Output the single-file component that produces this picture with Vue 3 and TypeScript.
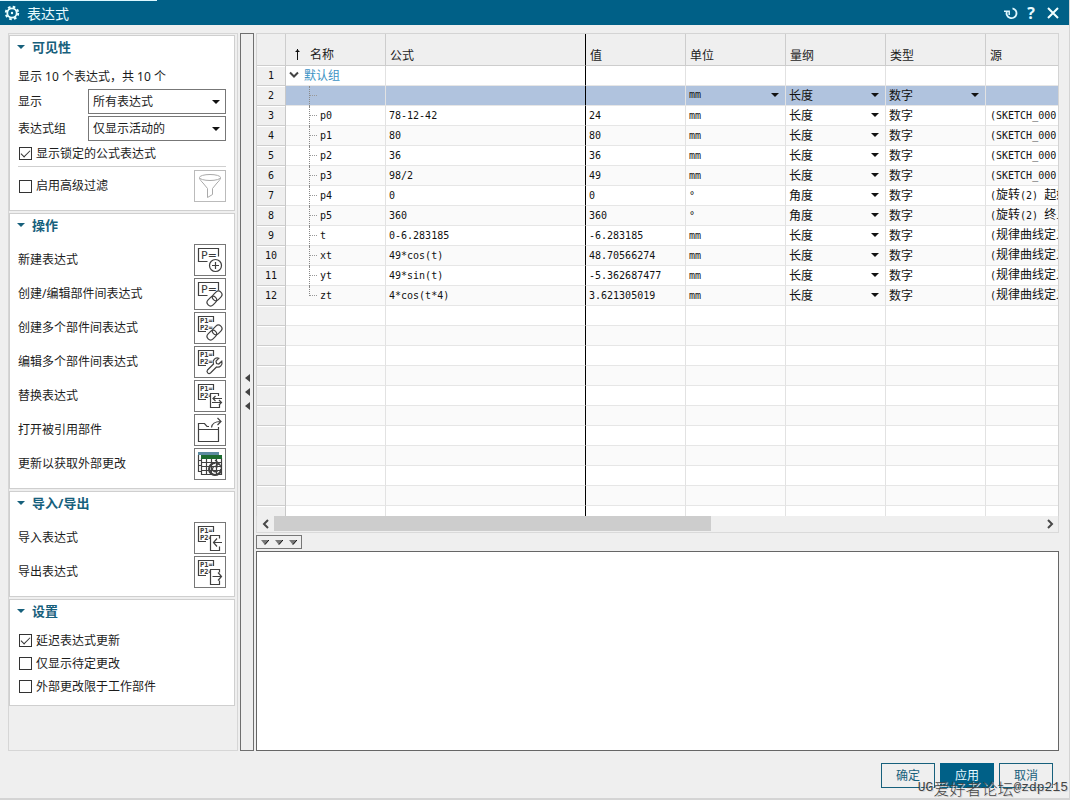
<script setup lang="ts">
import { ref } from 'vue'

interface Row {
  name: string
  formula: string
  value: string
  unit: string
  dim: string
  type: string
  source: string
}
interface Run {
  text: string
  latin: boolean
}
interface Action {
  label: string
  icon: string
}

const show = ref('所有表达式')
const group = ref('仅显示活动的')
const lockedFormulas = ref(true)
const advancedFilter = ref(false)
const notes = ref('')

const settings = ref([
  { id: 'delay', label: '延迟表达式更新', on: true },
  { id: 'pending', label: '仅显示待定更改', on: false },
  { id: 'external', label: '外部更改限于工作部件', on: false },
])

const actions: Action[] = [
  { label: '新建表达式', icon: 'new' },
  { label: '创建/编辑部件间表达式', icon: 'link' },
  { label: '创建多个部件间表达式', icon: 'multilink' },
  { label: '编辑多个部件间表达式', icon: 'wrench' },
  { label: '替换表达式', icon: 'replace' },
  { label: '打开被引用部件', icon: 'open' },
  { label: '更新以获取外部更改', icon: 'update' },
]
const transfers: Action[] = [
  { label: '导入表达式', icon: 'import' },
  { label: '导出表达式', icon: 'export' },
]

const row = (name: string, formula: string, value: string, unit: string, dim: string, source: string): Row => ({
  name, formula, value, unit, dim, type: '数字', source,
})
const rows: Row[] = [
  row('p0', '78-12-42', '24', 'mm', '长度', '(SKETCH_000:'),
  row('p1', '80', '80', 'mm', '长度', '(SKETCH_000:'),
  row('p2', '36', '36', 'mm', '长度', '(SKETCH_000:'),
  row('p3', '98/2', '49', 'mm', '长度', '(SKETCH_000:'),
  row('p4', '0', '0', '°', '角度', '(旋转(2) 起始'),
  row('p5', '360', '360', '°', '角度', '(旋转(2) 终止'),
  row('t', '0-6.283185', '-6.283185', 'mm', '长度', '(规律曲线定义'),
  row('xt', '49*cos(t)', '48.70566274', 'mm', '长度', '(规律曲线定义'),
  row('yt', '49*sin(t)', '-5.362687477', 'mm', '长度', '(规律曲线定义'),
  row('zt', '4*cos(t*4)', '3.621305019', 'mm', '长度', '(规律曲线定义'),
]
const emptyRows = 40

function runs(text: string): Run[] {
  return (text.match(/[\x00-\xff]+|[^\x00-\xff]+/g) ?? []).map((t) => ({
    text: t,
    latin: t.charCodeAt(0) < 256,
  }))
}
const watermark = runs('UG爱好者论坛@zdp215')
</script>

<template>
  <div class="window">
    <header class="titlebar">
      <svg class="gear" viewBox="0 0 16 16" width="16" height="16">
        <circle cx="8" cy="8" r="6.2" fill="none" stroke="#e8ffff" stroke-width="2" stroke-dasharray="2.6 2.27" />
        <circle cx="8" cy="8" r="4.7" fill="none" stroke="#e8ffff" stroke-width="1.8" />
        <circle cx="8" cy="8" r="1.2" fill="#e8ffff" />
      </svg>
      <h1>表达式</h1>
      <button type="button" aria-label="重置">
        <svg viewBox="0 0 14 14" width="14" height="14" fill="none" stroke="#dff8ff" stroke-width="1.8">
          <path d="M8.500 2.300A5 5 0 1 1 2.800 5.500" />
          <path d="M0 5.200H5.200V9" stroke-width="1.5" />
        </svg>
      </button>
      <button type="button" class="help" aria-label="帮助">?</button>
      <button type="button" aria-label="关闭">
        <svg viewBox="0 0 14 14" width="14" height="14" fill="none" stroke="#f2ffff" stroke-width="2">
          <path d="M2 2L12 12M12 2L2 12" />
        </svg>
      </button>
    </header>

    <main>
      <aside class="side">
        <section class="visibility">
          <h2><i class="tri"></i>可见性</h2>
          <p>显示 10 个表达式，共 10 个</p>
          <div class="field">
            <label for="show">显示</label>
            <span class="pick">
              <select id="show" v-model="show"><option>所有表达式</option></select>
              <i class="arrow"></i>
            </span>
          </div>
          <div class="field">
            <label for="group">表达式组</label>
            <span class="pick">
              <select id="group" v-model="group"><option>仅显示活动的</option></select>
              <i class="arrow"></i>
            </span>
          </div>
          <label class="check tall"><input v-model="lockedFormulas" type="checkbox" />显示锁定的公式表达式</label>
          <div class="filter">
            <label class="check"><input v-model="advancedFilter" type="checkbox" />启用高级过滤</label>
            <button type="button" class="tool off" disabled aria-label="过滤">
              <svg viewBox="0 0 30 30" width="30" height="30" fill="none" stroke="#aaaaaa">
                <ellipse cx="15" cy="6.5" rx="10.5" ry="3" />
                <path d="M4.5 7C5 9 6.500 10.500 8 12L12.500 17.500V26.500L17.500 23.500V17.500L22 12C23.500 10.500 25 9 25.500 7" />
              </svg>
            </button>
          </div>
        </section>

        <section v-for="(list, i) in [actions, transfers]" :key="i">
          <h2><i class="tri"></i>{{ i === 0 ? '操作' : '导入/导出' }}</h2>
          <div v-for="a in list" :key="a.icon" class="action">
            <span :id="'l-' + a.icon">{{ a.label }}</span>
            <button type="button" class="tool" :aria-labelledby="'l-' + a.icon">
              <svg viewBox="0 0 30 30" width="30" height="30" fill="none" stroke="#404040" stroke-width="1.2">
                <template v-if="a.icon === 'new' || a.icon === 'link'">
                  <path d="M12.500 16.500H3.500V3.500H23.500V11.500" />
                  <text class="big" x="6" y="14">P=</text>
                </template>
                <template v-else-if="a.icon !== 'open' && a.icon !== 'update'">
                  <path d="M11 18.500H3.500V3.500H18.500V9" />
                  <text class="small" x="5" y="10">P1=</text>
                  <text class="small" x="5" y="17">P2=</text>
                </template>
                <template v-if="a.icon === 'new'">
                  <circle cx="20.500" cy="20.500" r="6" fill="#fff" />
                  <path d="M17 20.500H24M20.500 17V24" />
                </template>
                <template v-if="a.icon === 'link' || a.icon === 'multilink'">
                  <g transform="rotate(-45 19.500 19.500)">
                    <rect x="10.500" y="16" width="10.500" height="7" rx="3.500" fill="#fff" />
                    <rect x="18" y="16" width="10.500" height="7" rx="3.500" />
                  </g>
                </template>
                <path
                  v-if="a.icon === 'wrench'"
                  fill="#fff"
                  d="M12.500 23L18.500 17C17 13.500 20 10 23.800 11.200L21 14.200L21.500 16.500L23.800 17L26.800 14.200C27.800 18 25 21 21.500 20L15.500 26C13.500 27.500 11 25 12.500 23Z"
                />
                <template v-if="a.icon === 'replace'">
                  <path d="M15.500 12.500H23.500V26.500H15.500Z" fill="#fff" stroke="none" />
                  <path d="M23.500 15V12.500H15.500V26.500H24.500V23.500" />
                  <path d="M27 17.500H18M20.500 15L18 17.500L20.500 20M17 21.500H26.500M24 19L26.500 21.500L24 24" />
                </template>
                <template v-if="a.icon === 'import' || a.icon === 'export'">
                  <path d="M15.500 12.500H23.500V27.500H15.500Z" fill="#fff" stroke="none" />
                  <path d="M24.500 15.500V12.500H15.500V27.500H24.500V23.500" />
                </template>
                <path v-if="a.icon === 'import'" d="M27 19.500H18.500M22 15.500L18.500 19.500L22 23.500" />
                <path v-if="a.icon === 'export'" d="M17.500 19.500H26.500M23 15.500L26.500 19.500L23 23.500" />
                <template v-if="a.icon === 'open'">
                  <path d="M3.500 14.500V8.500H9.500L12 11.500H14M3.500 14.500H23.500V26.500H3.500ZM23.500 14.500V12" />
                  <path d="M16.500 12.500C17 9 20 6.500 25.500 6.500M22.500 3L26 6.500L22.500 10" />
                </template>
                <template v-if="a.icon === 'update'">
                  <path d="M3.500 6V22.500H6M3.500 11.500H7M3.500 16.500H7" />
                  <path d="M3 4.500H24" stroke="#5c8ba0" stroke-width="3" />
                  <path d="M6.500 9V25.500H26.500V9M11.500 9V25.500M16.500 9V25.500M21.500 9V25.500M6.500 13.500H26.500M6.500 17.500H26.500M6.500 21.500H26.500" fill="#fff" />
                  <path d="M6 8H27" stroke="#1d6b30" stroke-width="4" />
                  <circle cx="20.500" cy="20" r="6" stroke="#404040" />
                  <path d="M20 14A6 6 0 1 0 26 20" stroke-width="2" />
                  <path d="M22.500 18.300A2.800 2.800 0 1 0 22.500 21.800H19.500M20 11L24 14.500L20 18" />
                </template>
              </svg>
            </button>
          </div>
        </section>

        <section>
          <h2><i class="tri"></i>设置</h2>
          <label v-for="s in settings" :key="s.id" class="check row"><input v-model="s.on" type="checkbox" />{{ s.label }}</label>
        </section>
      </aside>

      <button type="button" class="splitter" aria-label="折叠面板"><i></i><i></i><i></i></button>

      <div class="work">
        <div class="sheet">
          <table>
            <colgroup>
              <col class="c-num" /><col class="c-name" /><col class="c-formula" /><col class="c-std" />
              <col class="c-std" /><col class="c-std" /><col class="c-std" /><col class="c-source" />
            </colgroup>
            <thead>
              <tr>
                <th></th>
                <th>
                  <svg class="sort" viewBox="0 0 7 12" width="7" height="12" fill="none" stroke="#111"><path d="M3.500 1V12M1.500 3.500H5.500M2.500 2.500H4.500" /></svg>名称
                </th>
                <th>公式</th><th>值</th><th>单位</th><th>量纲</th><th>类型</th><th>源</th>
              </tr>
            </thead>
            <tbody>
              <tr>
                <td>1</td>
                <td class="root">
                  <div>
                    <svg viewBox="0 0 10 8" width="10" height="8" fill="none" stroke="#444" stroke-width="2"><path d="M1 1.500L5 5.500L9 1.500" /></svg>默认组
                  </div>
                </td>
                <td></td><td></td><td></td><td></td><td></td><td></td>
              </tr>
              <tr class="selected">
                <td>2</td>
                <td class="node"><div><i class="branch"></i></div></td>
                <td></td><td></td>
                <td><span class="pick"><select class="latin" aria-label="单位"><option>mm</option></select><i class="arrow"></i></span></td>
                <td><span class="pick"><select aria-label="量纲"><option>长度</option></select><i class="arrow"></i></span></td>
                <td><span class="pick"><select aria-label="类型"><option>数字</option></select><i class="arrow"></i></span></td>
                <td></td>
              </tr>
              <tr v-for="(r, i) in rows" :key="r.name">
                <td>{{ i + 3 }}</td>
                <td class="node"><div><i class="branch" :class="{ last: i === rows.length - 1 }"></i>{{ r.name }}</div></td>
                <td>{{ r.formula }}</td>
                <td>{{ r.value }}</td>
                <td>{{ r.unit }}</td>
                <td><span class="pick"><select :aria-label="'量纲 ' + r.name"><option>{{ r.dim }}</option></select><i class="arrow"></i></span></td>
                <td class="han">{{ r.type }}</td>
                <td class="source"><span v-for="(s, k) in runs(r.source)" :key="k" :class="{ han: !s.latin }">{{ s.text }}</span></td>
              </tr>
              <tr v-for="n in emptyRows" :key="n">
                <td></td><td></td><td></td><td></td><td></td><td></td><td></td><td></td>
              </tr>
            </tbody>
          </table>
        </div>
        <div class="scroll">
          <button type="button" aria-label="向左滚动">
            <svg viewBox="0 0 8 10" width="8" height="10" fill="none" stroke="#484848" stroke-width="2"><path d="M6 1L2 5L6 9" /></svg>
          </button>
          <div class="track"><div class="thumb"></div></div>
          <button type="button" aria-label="向右滚动">
            <svg viewBox="0 0 8 10" width="8" height="10" fill="none" stroke="#484848" stroke-width="2"><path d="M2 1L6 5L2 9" /></svg>
          </button>
        </div>
        <button type="button" class="fold" aria-label="折叠详细信息">
          <svg v-for="n in 3" :key="n" viewBox="0 0 8 5" width="8" height="5"><path d="M0 0H8L4 5Z" fill="#777" /><path d="M8 0L4 4.500" stroke="#111" /></svg>
        </button>
        <textarea v-model="notes" aria-label="详细信息"></textarea>
      </div>
    </main>

    <footer>
      <button type="button">确定</button>
      <button type="button" class="primary">应用</button>
      <button type="button">取消</button>
    </footer>
    <div class="watermark"><span v-for="(s, k) in watermark" :key="k" :class="{ wide: !s.latin }">{{ s.text }}</span></div>
  </div>
</template>

<style>
body {
  margin: 0;
}
</style>

<style scoped>
.window {
  position: relative;
  box-sizing: border-box;
  height: 100vh;
  min-height: 800px;
  display: flex;
  flex-direction: column;
  overflow: hidden;
  background: #efefef;
  border-right: 1px solid #d4d4d4;
  border-bottom: 2px solid #d4d4d4;
  font: 12px/20px "Noto Sans", "Noto Sans CJK SC", sans-serif;
  color: #1c1c1c;
}
button,
select,
textarea {
  margin: 0;
  padding: 0;
  border: 0;
  border-radius: 0;
  background: none;
  font: inherit;
  color: inherit;
}
svg {
  display: block;
}
.titlebar {
  flex: none;
  height: 25px;
  box-sizing: border-box;
  padding: 0 8px 0 4px;
  display: flex;
  align-items: center;
  gap: 4px;
  background: linear-gradient(#dcf8ff, #dcf8ff) 0 0 / 157px 1px no-repeat #006087;
  color: #e8fbff;
}
.titlebar h1 {
  flex: 1;
  margin: 0 0 0 3px;
  padding-top: 2px;
  font-size: 14px;
  font-weight: 400;
}
.titlebar button {
  width: 16px;
  height: 20px;
  display: grid;
  place-items: center;
}
.titlebar .help {
  font: 700 16px/20px "Open Sans", sans-serif;
}
.titlebar button:last-child {
  margin-left: 2px;
}
main {
  flex: 1;
  min-height: 0;
  display: flex;
  gap: 2px;
  padding: 8px 10px 0 8px;
}
.side {
  flex: none;
  width: 230px;
  box-sizing: border-box;
  border: 1px solid #d6d6d6;
  padding: 1px 2px 0 0;
  display: flex;
  flex-direction: column;
  gap: 2px;
}
section {
  background: #fff;
  border: 1px solid #cfcfcf;
  padding: 0 8px 7px;
}
h2 {
  display: flex;
  align-items: center;
  height: 22px;
  margin: 0 0 7px;
  font-size: 13px;
  font-weight: 700;
  color: #17607c;
}
.tri {
  margin: 0 7px 0 -1px;
  border: 4px solid transparent;
  border-top-color: #17607c;
  border-bottom: 0;
}
section p {
  margin: 0;
  height: 25px;
  line-height: 25px;
}
.visibility h2 {
  margin-bottom: 6px;
}
.visibility {
  padding-bottom: 8px;
}
.field {
  display: flex;
  align-items: center;
  height: 25px;
  margin-bottom: 2px;
}
.field + .check {
  margin-top: -2px;
}
.field label {
  width: 70px;
}
.pick {
  display: grid;
  align-items: center;
}
.pick > * {
  grid-area: 1 / 1;
}
.pick select {
  appearance: none;
  width: 100%;
  outline: 0;
}
.field .pick {
  flex: 1;
}
.field select {
  height: 25px;
  box-sizing: border-box;
  padding: 0 4px;
  border: 1px solid #777;
  background: #fff;
}
.arrow {
  justify-self: end;
  margin-right: 6px;
  border: 4px solid transparent;
  border-top-color: #111;
  border-bottom: 0;
  pointer-events: none;
}
.check {
  display: flex;
  align-items: center;
  gap: 4px;
}
.check.tall {
  height: 25px;
}
.check.row {
  height: 23px;
}
.check input {
  appearance: none;
  display: grid;
  place-items: center;
  width: 13px;
  height: 13px;
  box-sizing: border-box;
  margin: 0 0 0 1px;
  border: 1px solid #333;
  background: #fff;
}
.check input:checked::before {
  content: "";
  width: 8px;
  height: 4px;
  margin-top: -3px;
  border: solid #333;
  border-width: 0 0 1px 1px;
  transform: rotate(-45deg);
}
.filter {
  display: flex;
  align-items: center;
  justify-content: space-between;
  border-top: 1px solid #cfcfcf;
  padding-top: 3px;
}
.tool {
  flex: none;
  width: 32px;
  height: 32px;
  border: 1px solid #777;
  background: #fff;
}
.tool.off {
  border-color: #bbb;
}
.tool text {
  fill: #383838;
  stroke: none;
}
.tool .big {
  font: 11px "DejaVu Sans", sans-serif;
}
.tool .small {
  font: 700 7px "DejaVu Sans Mono", monospace;
}
.action {
  display: flex;
  align-items: center;
  justify-content: space-between;
  height: 34px;
}
.splitter {
  flex: none;
  width: 14px;
  border: 1px solid #6f6f6f;
  display: flex;
  flex-direction: column;
  align-items: center;
  justify-content: center;
  gap: 6px;
}
.splitter i {
  border: 4px solid transparent;
  border-right: 5px solid #444;
  border-left: 0;
}
.work {
  flex: 1;
  min-width: 0;
  display: flex;
  flex-direction: column;
}
.sheet {
  flex: 1;
  min-height: 0;
  overflow: hidden;
  border: 1px solid #d4d4d4;
  border-bottom: 0;
  background: #fff;
}
table {
  width: 929px;
  table-layout: fixed;
  border-collapse: separate;
  border-spacing: 0;
  font: 10px/19px "DejaVu Sans Mono", "Noto Sans CJK SC", monospace;
}
.c-num {
  width: 29px;
}
.c-name,
.c-std {
  width: 100px;
}
.c-formula,
.c-source {
  width: 200px;
}
th {
  height: 32px;
  box-sizing: border-box;
  padding: 10px 0 0 4px;
  border-right: 1px solid #cdcdcd;
  border-bottom: 1px solid #cdcdcd;
  background: #efefef;
  font: 12px/20px "Noto Sans CJK SC", sans-serif;
  text-align: left;
}
th .sort {
  display: inline-block;
  margin: 0 9px 5px 4px;
  vertical-align: middle;
}
td {
  height: 20px;
  box-sizing: border-box;
  padding: 0 0 0 3px;
  border-right: 1px solid #e2e2e2;
  border-bottom: 1px solid #e6e6e6;
  white-space: nowrap;
  color: #111;
}
tr:nth-child(even) td {
  background: #fafafa;
}
tbody td:first-child,
tbody tr:nth-child(even) td:first-child {
  padding: 0;
  background: #efefef;
  border-right-color: #c8c8c8;
  border-bottom-color: #cdcdcd;
  box-shadow: inset 0 1px #fff;
  text-align: center;
}
th:nth-child(3),
td:nth-child(3) {
  border-right-color: #000;
}
tbody tr.selected td:not(:first-child) {
  background: #b0c3de;
}
td .pick {
  height: 17px;
  padding-bottom: 2px;
}
td select {
  height: 17px;
  font: 12px/17px "Noto Sans CJK SC", sans-serif;
}
td select.latin {
  font: 10px/17px "DejaVu Sans Mono", monospace;
}
.han {
  font: 12px/17px "Noto Sans CJK SC", sans-serif;
}
td.han {
  padding-bottom: 2px;
}
td.source {
  padding-left: 4px;
}
td.source .han {
  line-height: 16px;
}
.root div,
.node div {
  display: flex;
  align-items: center;
  height: 19px;
}
.root div {
  gap: 5px;
  height: 17px;
  padding-bottom: 2px;
  font: 12px/17px "Noto Sans CJK SC", sans-serif;
  color: #3d93c4;
}
.node {
  padding-left: 23px;
}
.branch {
  width: 8px;
  height: 20px;
  margin-right: 2px;
  border-left: 1px dotted #888;
  background: repeating-linear-gradient(90deg, #999 0 1px, transparent 1px 2px) 0 9px / 8px 1px no-repeat;
}
.branch.last {
  height: 10px;
  align-self: flex-start;
}
.scroll {
  flex: none;
  display: flex;
  height: 16px;
  border: 1px solid #dadada;
  border-top: 0;
}
.scroll button {
  width: 17px;
  display: grid;
  place-items: center;
}
.track {
  flex: 1;
}
.thumb {
  width: 57%;
  height: 15px;
  background: #cdcdcd;
}
.fold {
  flex: none;
  display: flex;
  align-items: center;
  justify-content: center;
  gap: 6px;
  width: 46px;
  height: 14px;
  margin: 2px 0;
  border: 1px solid #777;
}
textarea {
  flex: none;
  height: 200px;
  box-sizing: border-box;
  border: 1px solid #666;
  background: #fff;
  resize: none;
  outline: 0;
}
footer {
  flex: none;
  display: flex;
  justify-content: flex-end;
  gap: 5px;
  padding: 12px 16px 10px;
}
footer button {
  width: 54px;
  height: 25px;
  border: 1px solid #17607c;
  color: #17607c;
}
footer .primary {
  background: #006087;
  border-color: #006087;
  color: #e8fbff;
}
.watermark {
  position: absolute;
  right: 1px;
  bottom: 0;
  display: flex;
  align-items: center;
  height: 20px;
  font: 13px/20px "Liberation Mono", monospace;
  color: #444;
  text-shadow: 1px 1px #d8d8d8;
  pointer-events: none;
}
.watermark .wide {
  font: 300 16px/20px "Noto Sans CJK SC", sans-serif;
}
</style>
